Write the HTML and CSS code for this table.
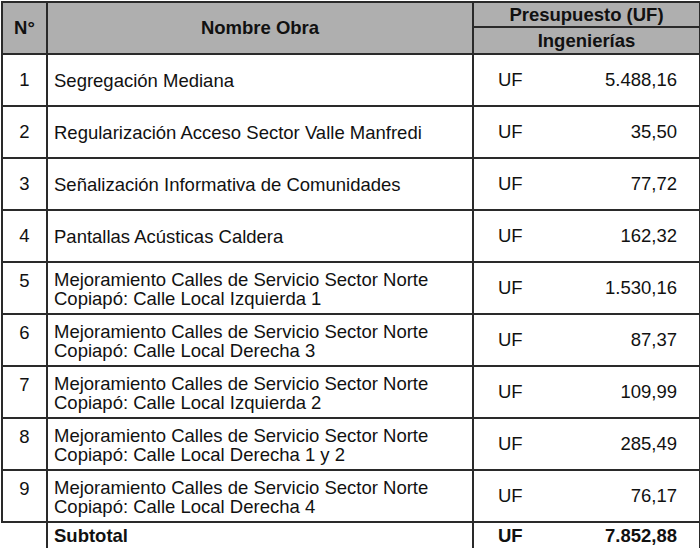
FILE: index.html
```html
<!DOCTYPE html>
<html lang="es">
<head>
<meta charset="utf-8">
<link rel="stylesheet" href="styles.css">
</head>
<body>
<table class="obras">
  <colgroup>
    <col class="c-num">
    <col class="c-name">
    <col class="c-uf">
    <col class="c-amt">
  </colgroup>
  <thead>
    <tr class="h1">
      <th rowspan="2" class="hnum">N°</th>
      <th rowspan="2">Nombre Obra</th>
      <th colspan="2">Presupuesto (UF)</th>
    </tr>
    <tr class="h2">
      <th colspan="2">Ingenierías</th>
    </tr>
  </thead>
  <tbody>
    <tr>
      <td class="num">1</td><td class="name">Segregación Mediana</td><td class="uf">UF</td><td class="amt">5.488,16</td>
    </tr>
    <tr>
      <td class="num">2</td><td class="name">Regularización Acceso Sector Valle Manfredi</td><td class="uf">UF</td><td class="amt">35,50</td>
    </tr>
    <tr>
      <td class="num">3</td><td class="name">Señalización Informativa de Comunidades</td><td class="uf">UF</td><td class="amt">77,72</td>
    </tr>
    <tr>
      <td class="num">4</td><td class="name">Pantallas Acústicas Caldera</td><td class="uf">UF</td><td class="amt">162,32</td>
    </tr>
    <tr class="two">
      <td class="num">5</td><td class="name">Mejoramiento Calles de Servicio Sector Norte<br>Copiapó: Calle Local Izquierda 1</td><td class="uf">UF</td><td class="amt">1.530,16</td>
    </tr>
    <tr class="two">
      <td class="num">6</td><td class="name">Mejoramiento Calles de Servicio Sector Norte<br>Copiapó: Calle Local Derecha 3</td><td class="uf">UF</td><td class="amt">87,37</td>
    </tr>
    <tr class="two">
      <td class="num">7</td><td class="name">Mejoramiento Calles de Servicio Sector Norte<br>Copiapó: Calle Local Izquierda 2</td><td class="uf">UF</td><td class="amt">109,99</td>
    </tr>
    <tr class="two">
      <td class="num">8</td><td class="name">Mejoramiento Calles de Servicio Sector Norte<br>Copiapó: Calle Local Derecha 1 y 2</td><td class="uf">UF</td><td class="amt">285,49</td>
    </tr>
    <tr class="two">
      <td class="num">9</td><td class="name">Mejoramiento Calles de Servicio Sector Norte<br>Copiapó: Calle Local Derecha 4</td><td class="uf">UF</td><td class="amt">76,17</td>
    </tr>
    <tr class="total">
      <td class="blank"></td><td class="name">Subtotal</td><td class="uf">UF</td><td class="amt">7.852,88</td>
    </tr>
  </tbody>
</table>
</body>
</html>
```
FILE: styles.css
```css
html, body {
  margin: 0;
  padding: 0;
  background: #ffffff;
}

body {
  padding: 1px 0 0 1px;
}

.obras {
  border-collapse: collapse;
  table-layout: fixed;
  width: 698px;
  font-family: "Liberation Sans", Arial, sans-serif;
  font-size: 18.5px;
  color: #111;
}

.c-num { width: 45px; }
.c-name { width: 426px; }
.c-uf { width: 91px; }
.c-amt { width: 136px; }

.obras th,
.obras td {
  border: 2px solid #2a2a2a;
  padding: 0;
}

.obras th {
  background: #afafaf;
  font-weight: bold;
  text-align: center;
  line-height: 20px;
}

.h1 { height: 25px; }
.h2 { height: 27px; }

.obras tbody tr { height: 52px; }

.num {
  text-align: center;
  vertical-align: middle;
}

.name {
  text-align: left;
  padding-left: 6px !important;
  line-height: 19px;
  vertical-align: middle;
}

.uf {
  text-align: left;
  padding-left: 24px !important;
  border-right: none !important;
  vertical-align: middle;
}

.amt {
  text-align: right;
  padding-right: 22px !important;
  border-left: none !important;
  vertical-align: middle;
}

.two .num {
  vertical-align: top;
  padding-top: 7px !important;
}

.two .name {
  padding-top: 1px !important;
}

.obras tbody tr.total { height: 27px; }

.total td {
  font-weight: bold;
  line-height: 20px;
}

.total .blank {
  border-left: none;
  border-bottom: none;
}
```
